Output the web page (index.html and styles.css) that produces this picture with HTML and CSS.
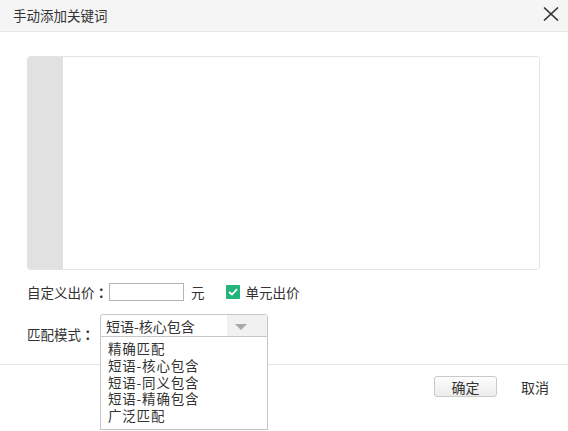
FILE: index.html
```html
<!DOCTYPE html>
<html lang="zh-CN">
<head>
    <meta charset="UTF-8">
    <meta name="viewport" content="width=device-width, initial-scale=1.0">
    <title>手动添加关键词</title>
    <link rel="stylesheet" href="styles.css">
</head>
<body>
    <div class="dialog">
        <div class="dialog-header">
            <span class="dialog-title">手动添加关键词</span>
            <button class="close-button" title="关闭">
                <svg width="16" height="14" viewBox="0 0 16 14">
                    <path d="M1 0.5 L15 13.5 M15 0.5 L1 13.5" stroke="#333" stroke-width="1.6" fill="none"/>
                </svg>
            </button>
        </div>

        <div class="dialog-body">
            <div class="editor">
                <div class="gutter"></div>
                <textarea class="keyword-input"></textarea>
            </div>

            <div class="form-row price-row">
                <label class="form-label" for="price">自定义出价<span class="colon" lang="zh-TW">：</span></label>
                <input type="text" id="price" class="price-input">
                <span class="unit">元</span>
                <span class="checkbox checked">
                    <svg width="10" height="8" viewBox="0 0 10 8">
                        <path d="M1 4 L4 6.5 L9 1.2" stroke="#fff" stroke-width="1.8" fill="none"/>
                    </svg>
                </span>
                <span class="checkbox-label">单元出价</span>
            </div>

            <div class="form-row match-row">
                <span class="form-label match-label">匹配模式<span class="colon" lang="zh-TW">：</span></span>
                <div class="select open">
                    <div class="select-value">
                        <span>短语-核心包含</span>
                        <span class="select-arrow"></span>
                    </div>
                    <ul class="select-options">
                        <li>精确匹配</li>
                        <li>短语-核心包含</li>
                        <li>短语-同义包含</li>
                        <li>短语-精确包含</li>
                        <li>广泛匹配</li>
                    </ul>
                </div>
            </div>
        </div>

        <div class="dialog-footer">
            <button class="btn-ok">确定</button>
            <a class="btn-cancel">取消</a>
        </div>
    </div>
</body>
</html>
```

FILE: styles.css
```css
* {
    margin: 0;
    padding: 0;
    box-sizing: border-box;
}
html, body {
    height: 100%;
    background: #fff;
    font-family: "Noto Sans CJK SC", "Noto Sans", sans-serif;
    color: #333;
}
.dialog {
    width: 568px;
    height: 431px;
    overflow: hidden;
    background: #fff;
}
.dialog-header {
    height: 32px;
    background: #f5f5f5;
    border-bottom: 1px solid #e6e6e6;
    display: flex;
    align-items: center;
    justify-content: space-between;
    padding: 0 9px 1px 13px;
}
.dialog-title {
    font-size: 13.5px;
    color: #333;
}
.close-button {
    border: none;
    background: none;
    display: flex;
    cursor: pointer;
    margin-top: -2px;
}
.dialog-body {
    padding: 24px 28px 27px 27px;
}
.editor {
    display: flex;
    height: 214px;
    border: 1px solid #e4e4e4;
    border-radius: 3px;
    overflow: hidden;
}
.gutter {
    width: 35px;
    background: #e1e1e1;
}
.keyword-input {
    flex: 1;
    border: none;
    resize: none;
    outline: none;
}
.form-row {
    display: flex;
    font-size: 13.5px;
}
/* traditional-style punctuation keeps the colon centred in its cell */
.colon {
    font-family: "Noto Sans CJK TC", sans-serif;
    font-weight: bold;
}
.price-row {
    margin-top: 13px;
    height: 18px;
    align-items: center;
}
.price-row .form-label {
    width: 82px;
}
.price-input {
    width: 75px;
    height: 18px;
    border: 1px solid #b5b5b5;
    outline: none;
}
.unit {
    margin-left: 7px;
}
.checkbox {
    width: 14px;
    height: 14px;
    margin-left: 21px;
    background: #22b47b;
    border-radius: 1px;
    display: flex;
    align-items: center;
    justify-content: center;
}
.checkbox-label {
    margin-left: 6px;
}
.match-row {
    margin-top: 13px;
    height: 23px;
    align-items: flex-start;
}
.match-label {
    width: 73px;
    margin-top: 11px;
    line-height: 18px;
}
.select {
    position: relative;
    width: 168px;
    font-size: 14px;
}
.select-value {
    height: 23px;
    border: 1px solid #c6c6c6;
    border-radius: 3px 3px 0 0;
    display: flex;
    align-items: center;
    justify-content: space-between;
    padding-left: 5px;
    background: #fff;
}
.select-arrow {
    width: 40px;
    height: 21px;
    background: #f1f1f1;
    position: relative;
}
.select-arrow::after {
    content: '';
    position: absolute;
    left: 8px;
    top: 9px;
    border-left: 6px solid transparent;
    border-right: 6px solid transparent;
    border-top: 6px solid #a9a9a9;
}
.select-options {
    position: absolute;
    left: 0;
    top: 23px;
    width: 168px;
    height: 93px;
    list-style: none;
    background: #fff;
    border: 1px solid #c6c6c6;
    border-top: none;
    padding: 3px 0 0 7px;
    z-index: 10;
    font-size: 13.5px;
}
.select-options li {
    height: 16.8px;
    line-height: 16.8px;
    letter-spacing: 0.8px;
}
.dialog-footer {
    border-top: 1px solid #e6e6e6;
    display: flex;
    justify-content: flex-end;
    align-items: center;
    padding: 11px 19px 0 0;
}
.btn-ok {
    width: 63px;
    height: 21px;
    border: 1px solid #c9c9c9;
    border-radius: 3px;
    background: linear-gradient(#fdfdfd, #ececec);
    font-family: inherit;
    font-size: 14px;
    color: #333;
    cursor: pointer;
}
.btn-cancel {
    margin-left: 24px;
    font-size: 14px;
    color: #333;
    cursor: pointer;
}
```
